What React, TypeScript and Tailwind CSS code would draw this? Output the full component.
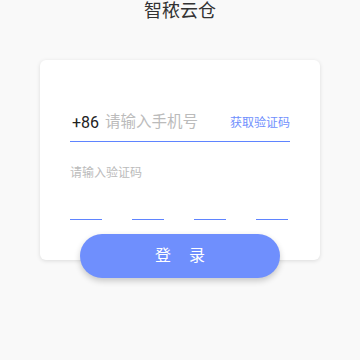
import React from "react";

export default function App() {
  return (
    <div
      className="w-[360px] h-[360px] bg-[#f9f9f9] flex flex-col items-center overflow-hidden"
      style={{ fontFamily: '"Roboto", "Noto Sans CJK SC", sans-serif' }}
    >
      <div className="text-[18px] leading-[22px] text-[#333333]">智秾云仓</div>
      <div className="mt-[38px] w-[280px] h-[200px] rounded-[6px] bg-white shadow-[0_1px_4px_rgba(0,0,0,0.12)] px-[30px] pt-[48px]">
        <div className="flex items-center h-[34px] pb-[4px] border-b border-solid border-b-[#5f84ff]">
          <span className="text-[16px] text-[#222222] ml-[2px] mr-[6px]">+86</span>
          <span className="text-[15.5px] text-[#bbbbbb]">请输入手机号</span>
          <span className="ml-auto text-[12px] text-[#6f8ffd]">获取验证码</span>
        </div>
        <div className="mt-[23px] text-[12px] leading-[16px] text-[#bbbbbb]">请输入验证码</div>
        <div className="mt-[38px] flex justify-between pr-[2px]">
          <div className="w-[32px] h-px bg-[#5f84ff]" />
          <div className="w-[32px] h-px bg-[#5f84ff]" />
          <div className="w-[32px] h-px bg-[#5f84ff]" />
          <div className="w-[32px] h-px bg-[#5f84ff]" />
        </div>
      </div>
      <div className="relative -mt-[26px] w-[200px] h-[44px] rounded-full bg-[#6f8ffd] shadow-[0_3px_6px_rgba(0,0,0,0.2)] flex items-center justify-center gap-[18px] text-white text-[16px]">
        <span>登</span>
        <span>录</span>
      </div>
    </div>
  );
}
